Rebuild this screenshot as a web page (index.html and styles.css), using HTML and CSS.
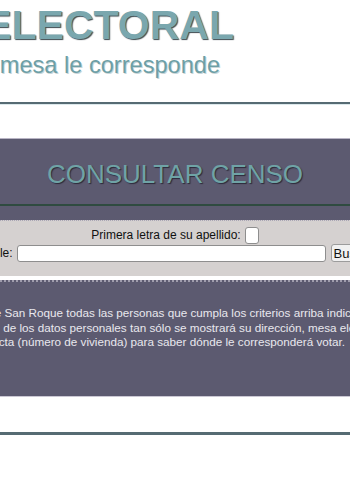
FILE: index.html
```html
<!DOCTYPE html>
<html lang="es">
<head>
    <meta charset="UTF-8">
    <meta name="viewport" content="width=device-width, initial-scale=1.0">
    <title>Censo Electoral</title>
    <link rel="stylesheet" href="styles.css">
</head>
<body>

    <div class="pagina">

        <header class="cabecera">
            <h1 class="titulo">CENSO ELECTORAL</h1>
            <p class="subtitulo">Compruebe qué mesa le corresponde</p>
        </header>

        <section class="censo">
            <h2 class="censo-titulo">CONSULTAR CENSO</h2>

            <form class="buscador">
                <div class="fila">
                    <label for="letra">Primera letra de su apellido:</label>
                    <input id="letra" class="campo-letra" type="text" maxlength="1">
                </div>
                <div class="fila fila-calle">
                    <label for="calle">Calle:</label>
                    <input id="calle" class="campo-calle" type="text">
                    <button class="btn-buscar" type="button">Buscar</button>
                </div>
            </form>
        </section>

        <div class="aviso">
            <p>
                Figuran en el censo electoral de San Roque todas las personas que cumpla los criterios arriba indicados.<br>
                Conforme a la ley de protección de los datos personales tan sólo se mostrará su dirección, mesa electoral y colegio.<br>
                Debe introducir la dirección exacta (número de vivienda) para saber dónde le corresponderá votar.
            </p>
        </div>

        <footer class="pie"></footer>

    </div>

</body>
</html>
```

FILE: styles.css
```css
html, body {
    overflow-x: hidden;
}

body {
    font-family: 'Liberation Sans', Arial, sans-serif;
    margin: 0;
    padding: 0;
    background-color: white;
    display: flex;
    justify-content: center;
}

.pagina {
    width: 700px;
    flex-shrink: 0;
}

/* cabecera */

.cabecera {
    padding: 1px 0 23px 2px;
    border-bottom: 2px solid #566b73;
    box-shadow: 0 1px 0 #dce9ec;
}

.titulo {
    margin: 0;
    font-size: 41px;
    line-height: 48px;
    font-weight: bold;
    color: #7aa7ae;
    text-shadow: 1px 1px 1px #3d4a4f;
}

.subtitulo {
    margin: 2px 0 0 -3px;
    font-size: 23.6px;
    line-height: 28px;
    color: #6d9fa6;
    text-shadow: 1px 1px 0 #c9d6d9;
}

/* consulta */

.censo {
    margin-top: 34px;
    border-top: 1px solid #b8b4c4;
    background-color: #5c5a70;
}

.censo-titulo {
    margin: 0;
    padding: 20px 0 15px 0;
    font-size: 26px;
    line-height: 30px;
    font-weight: normal;
    text-align: center;
    color: #6fa3a6;
    text-shadow: 1px 1px 1px #2c2a3a;
    border-bottom: 2px solid #2f4b40;
}

.buscador {
    margin-top: 14px;
    padding: 5px 0 14px 0;
    background-color: #d5d1d0;
    border-top: 1px dotted #aaa6b5;
    font-size: 12px;
    color: #111;
}

.fila {
    height: 18px;
    display: flex;
    justify-content: center;
    align-items: center;
}

.fila-calle {
    padding-left: 9px;
}

.buscador input {
    box-sizing: border-box;
    height: 17px;
    padding: 0 3px;
    border: 1px solid #8e8e8e;
    border-radius: 3px;
    background-color: white;
    font-family: 'Liberation Sans', Arial, sans-serif;
    font-size: 12px;
}

.campo-letra {
    width: 14px;
    margin-left: 4px;
}

.campo-calle {
    width: 309px;
    margin: 0 5px 0 4px;
}

.btn-buscar {
    box-sizing: border-box;
    height: 18px;
    padding: 0 2px;
    font-family: 'Liberation Sans', Arial, sans-serif;
    font-size: 13px;
    color: #111;
    background-color: #f1f1f1;
    border: 1px solid #9c9c9c;
    border-radius: 3px;
}

/* aviso */

.aviso {
    margin-top: 4px;
    padding: 24px 0 46px 10px;
    background-color: #5c5a70;
    border-top: 2px dotted #a09dad;
    border-bottom: 1px solid #cbc8d4;
}

.aviso p {
    margin: 0;
    font-size: 11.7px;
    line-height: 14.5px;
    color: #e9e8ee;
    white-space: nowrap;
}

.pie {
    margin-top: 35px;
    border-top: 3px solid #566b73;
    box-shadow: 0 1px 0 #dce9ec;
}
```
